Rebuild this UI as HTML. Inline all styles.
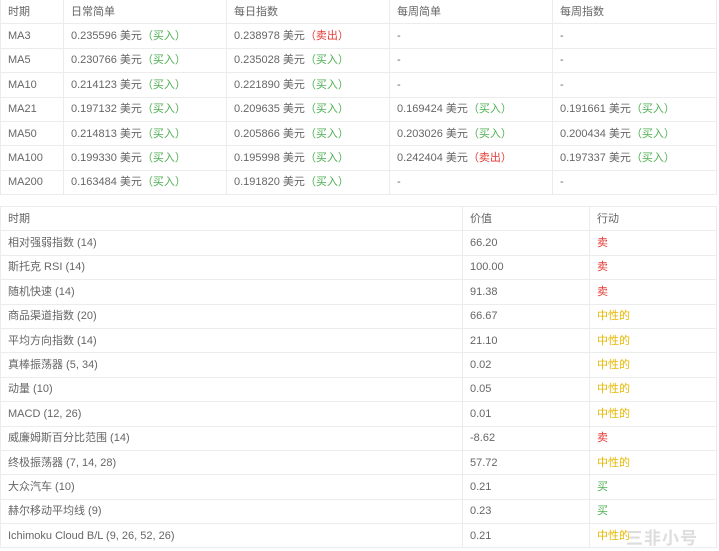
<!DOCTYPE html>
<html><head><meta charset="utf-8"><style>
body{margin:0;background:#fff;width:719px;height:551px;overflow:hidden;font-family:"Liberation Sans","Noto Sans CJK SC",sans-serif;font-size:11px;color:#666}
table{border-collapse:collapse;position:absolute;left:0;table-layout:fixed}
td{border:1px solid #ececec;padding:0 0 0 7px;height:23.4px;white-space:nowrap;overflow:hidden;vertical-align:middle;line-height:14px}
.g{color:#4caf50}.r{color:#e53935}.y{color:#e6b800}
#t1{top:-1px;width:716px}
#t2{top:206px;width:716px}
</style></head><body>
<table id="t1">
<col style="width:63px"><col style="width:163px"><col style="width:163px"><col style="width:163px"><col style="width:164px">
<tr><td>时期</td><td>日常简单</td><td>每日指数</td><td>每周简单</td><td>每周指数</td></tr>
<tr><td>MA3</td><td>0.235596 美元<span class="g">（买入）</span></td><td>0.238978 美元<span class="r">（卖出）</span></td><td>-</td><td>-</td></tr>
<tr><td>MA5</td><td>0.230766 美元<span class="g">（买入）</span></td><td>0.235028 美元<span class="g">（买入）</span></td><td>-</td><td>-</td></tr>
<tr><td>MA10</td><td>0.214123 美元<span class="g">（买入）</span></td><td>0.221890 美元<span class="g">（买入）</span></td><td>-</td><td>-</td></tr>
<tr><td>MA21</td><td>0.197132 美元<span class="g">（买入）</span></td><td>0.209635 美元<span class="g">（买入）</span></td><td>0.169424 美元<span class="g">（买入）</span></td><td>0.191661 美元<span class="g">（买入）</span></td></tr>
<tr><td>MA50</td><td>0.214813 美元<span class="g">（买入）</span></td><td>0.205866 美元<span class="g">（买入）</span></td><td>0.203026 美元<span class="g">（买入）</span></td><td>0.200434 美元<span class="g">（买入）</span></td></tr>
<tr><td>MA100</td><td>0.199330 美元<span class="g">（买入）</span></td><td>0.195998 美元<span class="g">（买入）</span></td><td>0.242404 美元<span class="r">（卖出）</span></td><td>0.197337 美元<span class="g">（买入）</span></td></tr>
<tr><td>MA200</td><td>0.163484 美元<span class="g">（买入）</span></td><td>0.191820 美元<span class="g">（买入）</span></td><td>-</td><td>-</td></tr>
</table>
<table id="t2">
<col style="width:462px"><col style="width:127px"><col style="width:127px">
<tr><td>时期</td><td>价值</td><td>行动</td></tr>
<tr><td>相对强弱指数 (14)</td><td>66.20</td><td class="r">卖</td></tr>
<tr><td>斯托克 RSI (14)</td><td>100.00</td><td class="r">卖</td></tr>
<tr><td>随机快速 (14)</td><td>91.38</td><td class="r">卖</td></tr>
<tr><td>商品渠道指数 (20)</td><td>66.67</td><td class="y">中性的</td></tr>
<tr><td>平均方向指数 (14)</td><td>21.10</td><td class="y">中性的</td></tr>
<tr><td>真棒振荡器 (5, 34)</td><td>0.02</td><td class="y">中性的</td></tr>
<tr><td>动量 (10)</td><td>0.05</td><td class="y">中性的</td></tr>
<tr><td>MACD (12, 26)</td><td>0.01</td><td class="y">中性的</td></tr>
<tr><td>威廉姆斯百分比范围 (14)</td><td>-8.62</td><td class="r">卖</td></tr>
<tr><td>终极振荡器 (7, 14, 28)</td><td>57.72</td><td class="y">中性的</td></tr>
<tr><td>大众汽车 (10)</td><td>0.21</td><td class="g">买</td></tr>
<tr><td>赫尔移动平均线 (9)</td><td>0.23</td><td class="g">买</td></tr>
<tr><td>Ichimoku Cloud B/L (9, 26, 52, 26)</td><td>0.21</td><td class="y">中性的</td></tr>
</table>
<div style="position:absolute;left:626px;top:524px;color:#ddd;font-size:17px;font-weight:bold;letter-spacing:1px">三非小号</div>
</body></html>
